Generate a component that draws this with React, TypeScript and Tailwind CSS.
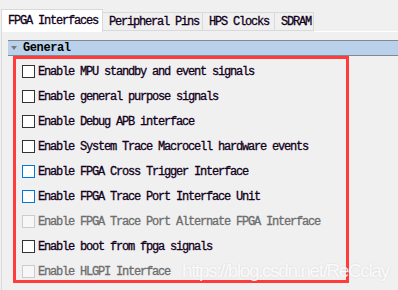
const tabs = [
  { label: "FPGA Interfaces", w: "w-[102px]" },
  { label: "Peripheral Pins", w: "w-[100px]" },
  { label: "HPS Clocks", w: "w-[72px]" },
  { label: "SDRAM", w: "w-[39px]" },
];

type Item = {
  label: string;
  state?: "normal" | "focus" | "disabled";
};

const items: Item[] = [
  { label: "Enable MPU standby and event signals" },
  { label: "Enable general purpose signals" },
  { label: "Enable Debug APB interface" },
  { label: "Enable System Trace Macrocell hardware events" },
  { label: "Enable FPGA Cross Trigger Interface", state: "focus" },
  { label: "Enable FPGA Trace Port Interface Unit", state: "focus" },
  { label: "Enable FPGA Trace Port Alternate FPGA Interface", state: "disabled" },
  { label: "Enable boot from fpga signals" },
  { label: "Enable HLGPI Interface", state: "disabled" },
];

const mono = "font-['Liberation_Mono',monospace]";

const Row = ({ item }: { item: Item }) => {
  const state = item.state ?? "normal";

  const box =
    state === "focus"
      ? "border-[#0078d7] bg-white"
      : state === "disabled"
      ? "border-[#cccccc] bg-[#f7f7f7]"
      : "border-[#333333] bg-white";

  return (
    <div className="flex h-[25px] shrink-0 items-center pl-[6px]">
      <div className={`h-[13px] w-[13px] shrink-0 border ${box}`} />
      <span
        className={`ml-[3px] whitespace-nowrap text-[12px] tracking-[-1.2px] [-webkit-text-stroke:0.3px_currentColor] ${mono} ${
          state === "disabled" ? "text-[#6d6d6d]" : "text-[#10001a]"
        }`}
      >
        {item.label}
      </span>
    </div>
  );
};

export default function App() {
  return (
    <div className="relative h-[290px] w-[398px] overflow-hidden bg-[#f0f0f0]">
      {/* tab strip */}
      <div className="flex h-[32px] items-end pl-[1px]">
        {tabs.map((tab, i) =>
          i === 0 ? (
            <div
              key={tab.label}
              className={`flex h-[23px] ${tab.w} items-start border border-b-0 border-[#d9d9d9] bg-white pl-[6px] pt-[4px]`}
            >
              <span className={`text-[12px] leading-[14px] tracking-[-1.2px] text-[#10001a] [-webkit-text-stroke:0.3px_currentColor] ${mono}`}>
                {tab.label}
              </span>
            </div>
          ) : (
            <div
              key={tab.label}
              className={`mb-[1px] flex h-[19px] ${tab.w} items-center border border-l-0 border-[#d9d9d9] bg-[#f0f0f0] pl-[6px]`}
            >
              <span className={`text-[12px] leading-[14px] tracking-[-1.2px] text-[#10001a] [-webkit-text-stroke:0.3px_currentColor] ${mono}`}>
                {tab.label}
              </span>
            </div>
          )
        )}
        <div className="h-[1px] flex-1 bg-white" />
      </div>

      {/* panel */}
      <div className="ml-[1px] h-[258px] border-l border-[#dadada] pt-[8px]">
        <div className="ml-[6px] flex h-[16px] items-center border-y border-[#828790] bg-[#b9d1ea]">
          <svg width="6" height="4" viewBox="0 0 6 4" className="ml-[3px]">
            <path d="M0 0H6L3 4Z" fill="#7a7a7a" />
          </svg>
          <span className={`ml-[6px] text-[12px] font-bold tracking-[-0.4px] text-black ${mono}`}>
            General
          </span>
        </div>

        <div className="ml-[11px] flex h-[227px] w-[336px] flex-col border-[3px] border-[#ff3b3b]">
          {items.map((item) => (
            <Row key={item.label} item={item} />
          ))}
        </div>
      </div>

      {/* watermark */}
      <span className="absolute left-[182px] top-[261px] whitespace-nowrap font-['Liberation_Sans',sans-serif] text-[19px] leading-[19px] tracking-[-1.4px] text-white/85 [text-shadow:0_0_2px_rgba(0,0,0,0.12)]">
        https://blog.csdn.net/ReCclay
      </span>
    </div>
  );
}
